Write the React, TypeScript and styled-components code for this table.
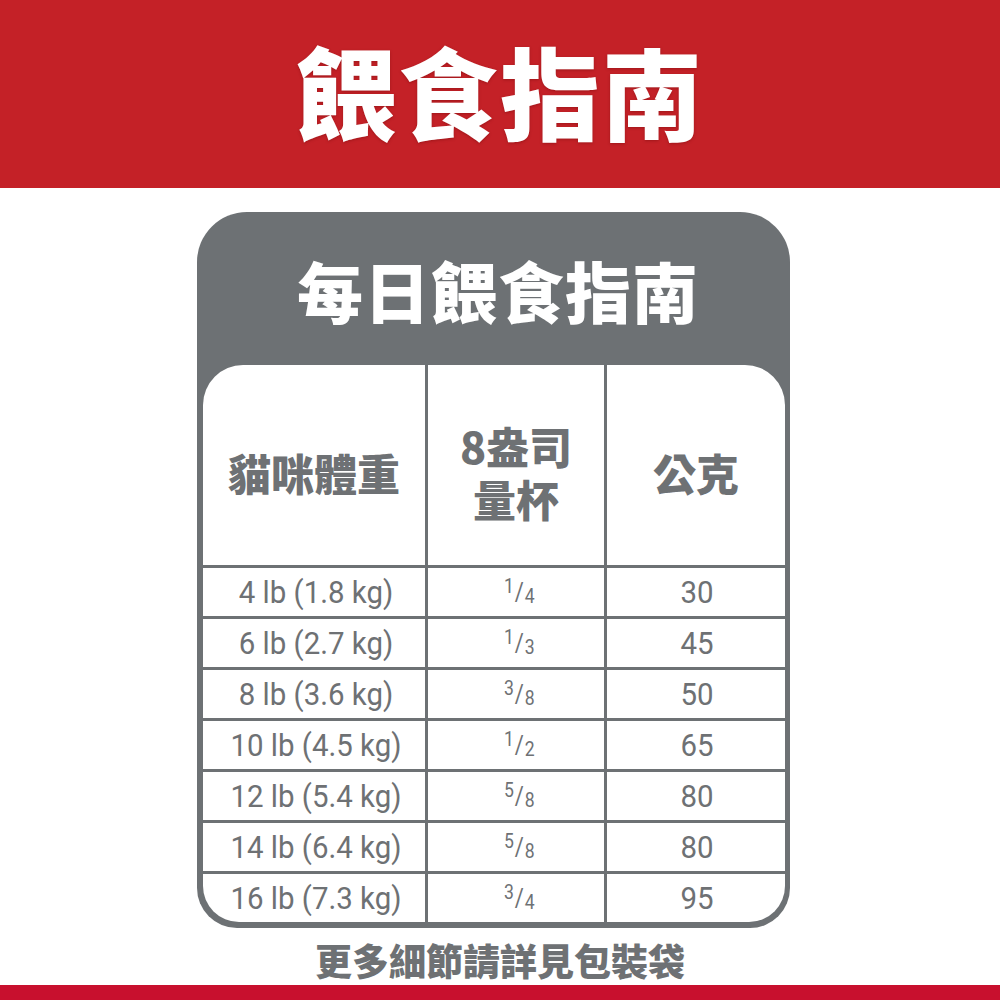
import React from "react";
import styled, { createGlobalStyle } from "styled-components";

const Global = createGlobalStyle`
  html, body { margin: 0; padding: 0; background: #ffffff; }
  body { width: 1000px; height: 1000px; overflow: hidden; font-family: "Noto Sans CJK TC", "Noto Sans", sans-serif; }
`;

const GRAY = "#6d7174";
const TEXT = "#6e7174";

const Page = styled.div`
  width: 1000px;
  height: 1000px;
  display: flex;
  flex-direction: column;
  background: #ffffff;
`;

const Header = styled.header`
  height: 188px;
  background: #c42127;
  display: flex;
  align-items: center;
  justify-content: center;
  flex-shrink: 0;
`;

const HeaderTitle = styled.h1`
  margin: 0;
  color: #ffffff;
  font-family: "Noto Sans CJK TC", sans-serif;
  font-weight: 900;
  font-size: 100px;
  line-height: 1;
  letter-spacing: 2px;
  text-shadow: 0 1px 3px rgba(90, 0, 0, 0.35);
  transform: translateY(-4px);
`;

const Main = styled.main`
  flex: 1;
  display: flex;
  flex-direction: column;
  align-items: center;
  padding-top: 24px;
`;

const Card = styled.section`
  width: 593px;
  margin-left: -13px;
  background: ${GRAY};
  border-radius: 50px 50px 40px 40px;
  padding: 0 5px 6px 6px;
  box-sizing: border-box;
  display: flex;
  flex-direction: column;
`;

const CardTitle = styled.h2`
  margin: 0;
  height: 153px;
  display: flex;
  align-items: center;
  justify-content: center;
  color: #ffffff;
  font-family: "Noto Sans CJK TC", sans-serif;
  font-weight: 900;
  font-size: 66px;
  letter-spacing: 1px;
  line-height: 1;
  padding-left: 8px;
`;

const Table = styled.div`
  display: grid;
  grid-template-columns: 222px 176px 178px;
  grid-template-rows: 200px repeat(7, 48px);
  gap: 3px;
  background: ${GRAY};
  border-radius: 40px 40px 36px 36px;
  overflow: hidden;
`;

const HeadCell = styled.div`
  background: #ffffff;
  display: flex;
  flex-direction: column;
  align-items: center;
  justify-content: center;
  gap: 10px;
  text-align: center;
  color: ${TEXT};
  font-family: "Noto Sans CJK TC", sans-serif;
  font-weight: 900;
  font-size: 43px;
  line-height: 1;
  padding-top: 14px;
  box-sizing: border-box;
`;

const HeadLine = styled.span`
  display: block;
`;

const Cell = styled.div<{ $shift?: number }>`
  background: #ffffff;
  display: flex;
  align-items: center;
  justify-content: center;
  padding-left: ${(p) => p.$shift ?? 0}px;
  box-sizing: border-box;
`;

const Num = styled.span`
  display: inline-block;
  color: ${TEXT};
  font-family: Roboto, "Liberation Sans", sans-serif;
  font-weight: 400;
  font-size: 32px;
  line-height: 1;
  transform: scaleX(0.92);
  white-space: nowrap;
`;

const Frac = styled.span`
  display: inline-flex;
  align-items: center;
  color: ${TEXT};
  font-family: Roboto, "Liberation Sans", sans-serif;
  font-weight: 400;
  font-size: 20px;
  line-height: 1;
  transform: scaleX(0.88);
`;

const FracTop = styled.span`
  position: relative;
  top: -6px;
`;

const FracSlash = styled.span`
  font-size: 25px;
  margin: 0 1px;
`;

const FracBottom = styled.span`
  position: relative;
  top: 4px;
`;

const Footer = styled.p`
  margin: 10px 0 0;
  color: ${TEXT};
  font-family: "Noto Sans CJK TC", sans-serif;
  font-weight: 900;
  font-size: 37px;
  line-height: 44px;
  text-align: center;
`;

const BottomBar = styled.div`
  height: 15px;
  background: #c8102e;
  flex-shrink: 0;
`;

const rows: [string, string, string, string][] = [
  ["4 lb (1.8 kg)", "1", "4", "30"],
  ["6 lb (2.7 kg)", "1", "3", "45"],
  ["8 lb (3.6 kg)", "3", "8", "50"],
  ["10 lb (4.5 kg)", "1", "2", "65"],
  ["12 lb (5.4 kg)", "5", "8", "80"],
  ["14 lb (6.4 kg)", "5", "8", "80"],
  ["16 lb (7.3 kg)", "3", "4", "95"],
];

export default function App() {
  return (
    <Page>
      <Global />
      <Header>
        <HeaderTitle>餵食指南</HeaderTitle>
      </Header>
      <Main>
        <Card>
          <CardTitle>每日餵食指南</CardTitle>
          <Table>
            <HeadCell>貓咪體重</HeadCell>
            <HeadCell>
              <HeadLine>8盎司</HeadLine>
              <HeadLine>量杯</HeadLine>
            </HeadCell>
            <HeadCell>公克</HeadCell>
            {rows.map(([w, n, d, g]) => (
              <React.Fragment key={w}>
                <Cell $shift={4}>
                  <Num>{w}</Num>
                </Cell>
                <Cell $shift={6}>
                  <Frac>
                    <FracTop>{n}</FracTop>
                    <FracSlash>/</FracSlash>
                    <FracBottom>{d}</FracBottom>
                  </Frac>
                </Cell>
                <Cell $shift={2}>
                  <Num>{g}</Num>
                </Cell>
              </React.Fragment>
            ))}
          </Table>
        </Card>
        <Footer>更多細節請詳見包裝袋</Footer>
      </Main>
      <BottomBar />
    </Page>
  );
}
